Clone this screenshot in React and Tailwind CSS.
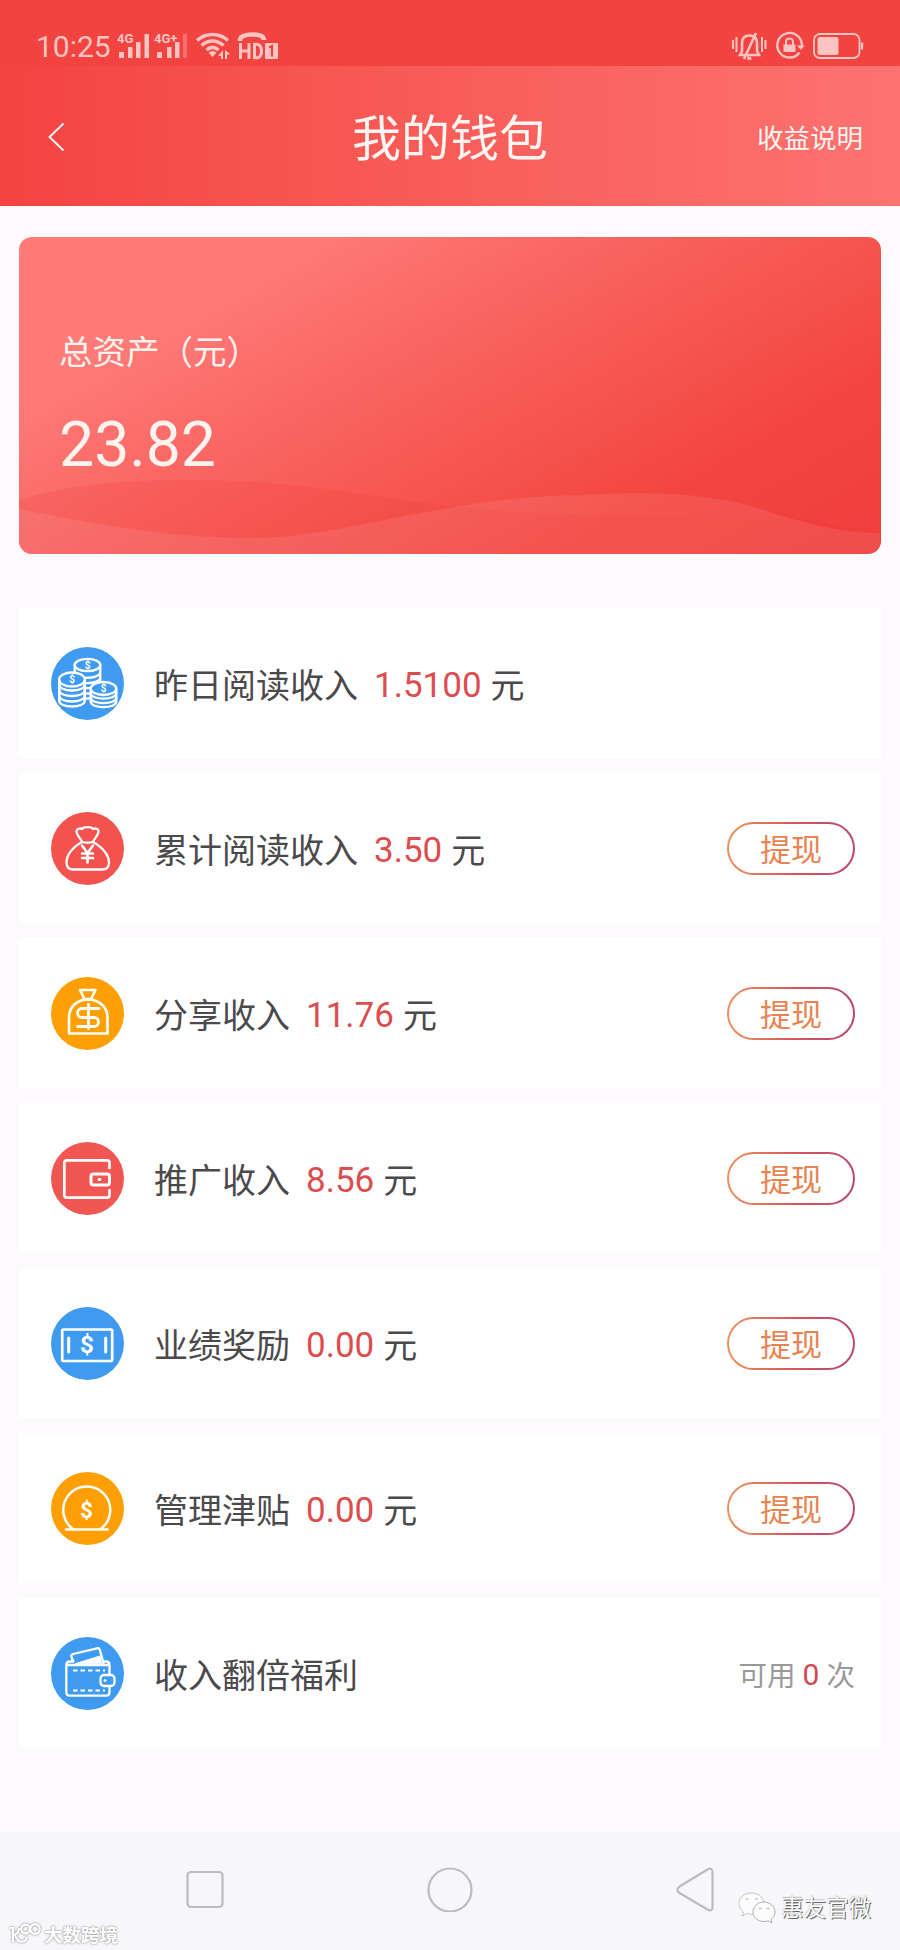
const ROWS = [
  { icon: CoinsIcon, label: '昨日阅读收入', amount: '1.5100' },
  { icon: PurseIcon, label: '累计阅读收入', amount: '3.50', withdraw: true },
  { icon: MoneyBagIcon, label: '分享收入', amount: '11.76', withdraw: true },
  { icon: WalletIcon, label: '推广收入', amount: '8.56', withdraw: true },
  { icon: BillIcon, label: '业绩奖励', amount: '0.00', withdraw: true },
  { icon: CoinIcon, label: '管理津贴', amount: '0.00', withdraw: true },
  { icon: CardWalletIcon, label: '收入翻倍福利', times: '0' },
]

function RoundIcon({ className, children }) {
  return (
    <svg
      className={`w-[73px] h-[73px] shrink-0 rounded-full ${className}`}
      viewBox="0 0 73 73"
      fill="none"
      stroke="#fff"
      strokeWidth="2.3"
      strokeLinecap="round"
      strokeLinejoin="round"
    >
      {children}
    </svg>
  )
}

function Sign({ x, y, size, children }) {
  return (
    <text
      x={x}
      y={y}
      fontSize={size}
      fontWeight="700"
      textAnchor="middle"
      fill="#fff"
      stroke="none"
      fontFamily="Roboto, sans-serif"
    >
      {children}
    </text>
  )
}

function CoinsIcon() {
  return (
    <RoundIcon className="bg-[#3f9bf0]">
      {/* back stack */}
      <ellipse cx="36.5" cy="18" rx="12.8" ry="6.2" />
      <path d="M23.7 18v8M49.3 18v17M32 30.5c10 1 17.3-1.500 17.300-6M34 36c8 .5 15.300-1.500 15.300-6M35 41c3 .3 5 0 7-.5M35 46.500h4M35 51.500h4" />
      {/* left stack */}
      <path d="M8.200 32.500v21c0 8 25.600 8 25.600 0v-21" fill="#3f9bf0" />
      <ellipse cx="21" cy="32.500" rx="12.800" ry="7" fill="#3f9bf0" />
      <path d="M8.200 37.500c0 8 25.600 8 25.600 0M8.200 43c0 8 25.600 8 25.600 0M8.200 48.500c0 8 25.600 8 25.600 0" />
      {/* right stack */}
      <path d="M39.700 41.500v13c0 7.500 25.600 7.500 25.600 0v-13" fill="#3f9bf0" />
      <ellipse cx="52.500" cy="41.500" rx="12.800" ry="6.500" fill="#3f9bf0" />
      <path d="M39.700 46c0 7.500 25.600 7.500 25.600 0M39.700 50.500c0 7.500 25.600 7.500 25.600 0" />
      <Sign x="36.500" y="21.500" size="10">$</Sign>
      <Sign x="21" y="35.500" size="10">$</Sign>
      <Sign x="52.500" y="44.500" size="10">$</Sign>
    </RoundIcon>
  )
}

function PurseIcon() {
  return (
    <RoundIcon className="bg-[#f3534f]">
      <path d="M31 30c-1.500-4-5.500-7-5.500-10.500 0-3 4-3.500 5.500-2.500 1.500-2.500 9.500-2.500 11 0 2-1 5.500-.5 5.500 2.500 0 3.500-4 6.500-5.500 10.500" />
      <path d="M31 30q5.500 1.500 11 0c10 5.500 16 13.500 16 20.500 0 4.500-2.500 7-7 7H22.500c-4.500 0-7-2.500-7-7 0-7 5.500-15 15.500-20.500z" />
      <path d="M31 33.500l5.500 7.500 5.500-7.500M36.500 41v9.500M31 41.500h11M31 46h11" strokeWidth="2.6" />
    </RoundIcon>
  )
}

function MoneyBagIcon() {
  return (
    <RoundIcon className="bg-[#fe9f05]">
      <path d="M29 13h15.500l-4.500 9h-6.500z" strokeWidth="2.600" />
      <path d="M18 56.500V40.500C18 30 26 22.500 37 22.500S56.500 30 56.500 40.500v16z" strokeWidth="2.600" />
      <path d="M48 31.500H31a4.500 4.500 0 0 0 0 9h12a4.500 4.500 0 0 1 0 9H26.500M37.500 27.500v24" strokeWidth="2.800" />
    </RoundIcon>
  )
}

function WalletIcon() {
  return (
    <RoundIcon className="bg-[#f15752]">
      <path d="M58.500 26v-5c0-1.600-1-2.600-2.600-2.600H16c-1.700 0-2.700 1-2.700 2.600v32c0 1.700 1 2.600 2.700 2.600h40c1.600 0 2.500-1 2.500-2.600v-5" strokeWidth="2.700" />
      <rect x="40" y="32" width="18.500" height="11" rx="2.500" strokeWidth="3" />
      <rect x="47" y="36.500" width="3" height="2" rx="1" fill="#fff" strokeWidth="1" />
    </RoundIcon>
  )
}

function BillIcon() {
  return (
    <RoundIcon className="bg-[#3f9bf0]">
      <rect x="11.200" y="22.500" width="50" height="31.500" rx="1" strokeWidth="2.700" />
      <path d="M17.700 31v14M54.700 31v14" strokeWidth="3" />
      <Sign x="36" y="46" size="24">$</Sign>
    </RoundIcon>
  )
}

function CoinIcon() {
  return (
    <RoundIcon className="bg-[#fe9f05]">
      <path d="M22 57a23.500 23.500 0 1 1 27.500 0M15 57.500h41.500" strokeWidth="2.500" />
      <Sign x="35.500" y="45.500" size="22">$</Sign>
    </RoundIcon>
  )
}

function CardWalletIcon() {
  return (
    <RoundIcon className="bg-[#3f9bf0]">
      <path d="M22 24l-1.500-4c-.5-1.500 0-2.500 1.500-3l24-5.700c1.500-.3 2.300 0 2.800 1.500L52.500 26" />
      <path d="M25 26.500l24-7.500 1.500 7.500z" fill="#fff" strokeWidth="1" />
      <path d="M58.500 37.500V28c0-2.500-1-3.500-3.500-3.500h-1.500M22.500 24.500H19c-2.500 0-3.700 1.200-3.700 3.500v27c0 2.500 1.200 3.700 3.700 3.700h36c2.500 0 3.500-1.200 3.500-3.700v-5M17 28h40" />
      <path d="M22 33.500h32M22 53.500h32" strokeWidth="2.200" strokeDasharray="4.500 3" strokeLinecap="butt" />
      <rect x="49.500" y="38" width="14" height="11" rx="3.500" />
      <circle cx="54" cy="43.500" r="1" fill="#fff" strokeWidth="1" />
    </RoundIcon>
  )
}

function StatusBar() {
  return (
    <div className="flex h-[66px] items-start justify-between bg-[#f1433f] pt-[30px] pl-[36px] pr-[36px] text-[#ffc4c1]">
      <div className="flex items-start">
        <span className="w-[74px] pt-[3px] font-[Roboto] text-[30px] leading-[28px] whitespace-nowrap">10:25</span>
        <svg className="ml-[6px]" width="162" height="32" viewBox="0 0 162 32" fill="currentColor">
          <g fontFamily="Roboto, sans-serif" fontWeight="700" fontSize="13">
            <text x="1" y="13">4G</text>
            <text x="38" y="13">4G+</text>
          </g>
          <path d="M3 22h5v6H3zM12 17h4.500v11H12zM20 12h4.500v16H20zM28.500 4H33v24h-4.500zM41 22h5v6h-5zM51 17h4.500v11H51zM59 12h4.500v16H59z" />
          <path d="M67 4h4v24h-4z" opacity=".35" />
          <g fill="none" stroke="currentColor" strokeWidth="3.600">
            <path d="M81 10.500c9-8 22-8 31 0" />
            <path d="M85.500 15.500c7-6 15-6 22 0" />
            <path d="M90.500 20c4-3.500 8-3.500 12 0" />
          </g>
          <path d="M92.500 22.500c2.500-2 5.500-2 8 0l-4 4.500zM107 20v9h-2v-3h-3zM109 20l5 4-3 1v4h-2z" />
          <path d="M124 11v-1c0-3 4-5.500 12.500-5.500s11.500 2.500 11.500 5.500" fill="none" stroke="currentColor" strokeWidth="4.600" />
          <path d="M124.500 13v16M133 13v16M124.500 21h9M138.500 14.300v13.400h2.500c6 0 6-13.400 0-13.400z" fill="none" stroke="currentColor" strokeWidth="3" />
          <rect x="149" y="13" width="13" height="16" rx="1" />
          <path d="M153 17.500l3-1.500v10.500" fill="none" stroke="#f1433f" strokeWidth="2.200" />
        </svg>
      </div>
      <svg width="133" height="31" viewBox="0 0 133 31" fill="none" stroke="currentColor">
        <path d="M2 10v9M5.500 7v15M31 7v15M34.500 10v9" strokeWidth="2" />
        <path d="M9 25l2-4v-8c0-5 3-7.500 7.500-7.500S26 8 26 13v8l2 4zM13 29L25 3M17.500 26.500v2h3" strokeWidth="2.600" />
        <path d="M68.500 22.500a12.300 12.300 0 1 1 2.300-6" strokeWidth="2.400" />
        <path d="M66 15.500h7.500L70 20z" fill="currentColor" stroke="none" />
        <rect x="52.500" y="14.500" width="12" height="7.500" fill="currentColor" stroke="none" />
        <path d="M55 15v-3.500c0-4 7-4 7 0V15" strokeWidth="2" />
        <rect x="83" y="4" width="45.500" height="24" rx="6" strokeWidth="1.800" />
        <rect x="86.500" y="7" width="21" height="18" rx="2.500" fill="currentColor" stroke="none" />
        <path d="M131 12.500v7" strokeWidth="2.400" />
      </svg>
    </div>
  )
}

function Header() {
  return (
    <header className="relative flex h-[140px] items-center justify-between bg-linear-to-r from-[#f34341] to-[#fd7370] pl-[48px] pr-[37px] pt-[2px] text-[#fff5f3]">
      <svg width="17" height="30" viewBox="0 0 17 30" fill="none" stroke="currentColor" strokeWidth="2">
        <path d="M15.500 1.500L1.500 15l14 13.500" />
      </svg>
      <h1 className="absolute inset-x-0 top-[34px] text-center text-[49px] leading-[70px]">我的钱包</h1>
      <span className="text-[26.500px] leading-[40px]">收益说明</span>
    </header>
  )
}

function AssetCard() {
  return (
    <section className="relative mx-[19px] mt-[31px] h-[317px] overflow-hidden rounded-[13px] bg-[linear-gradient(150deg,#ff7b78_20%,#f96460_43%,#f3453f_78%,#f03e3e_100%)] pl-[40px] text-[#fff3f0]">
      <svg className="absolute inset-0" width="861" height="317" viewBox="0 0 861 317">
        <path d="M0 263C70 240 180 240 260 247S420 272 520 276 680 282 756 277L861 296V317H0z" fill="#ee3a3a" opacity=".18" />
        <path d="M0 272C90 290 160 302 245 301 340 296 430 260 560 258 640 254 700 256 756 277 800 290 830 296 861 296V317H0z" fill="#fff" opacity=".09" />
      </svg>
      <div className="relative pt-[89px] text-[33.500px] leading-[48px]">总资产（元）</div>
      <div className="relative mt-[36px] font-[Roboto] text-[62.500px] leading-[70px]">23.82</div>
    </section>
  )
}

function WithdrawButton() {
  return (
    <button className="h-[53px] w-[128px] rounded-full bg-linear-to-r from-[#e8935f] via-[#d9575a] to-[#b94672] p-[2px]">
      <span className="flex h-full w-full items-center justify-center rounded-full bg-white pb-px text-[31px] leading-none text-[#e88352]">
        提现
      </span>
    </button>
  )
}

function IncomeRow({ row }) {
  const Icon = row.icon
  return (
    <li className="flex h-[150px] items-center bg-white pl-[32px] pr-[26px]">
      <Icon />
      <span className="ml-[30px] pt-[2px] text-[34px] leading-[50px] text-[#4b494c]">{row.label}</span>
      {row.amount && (
        <>
          <span className="ml-[16px] pt-[6px] font-[Roboto] text-[35px] leading-[50px] text-[#dc4d50]">{row.amount}</span>
          <span className="ml-[9px] pt-[2px] text-[34px] leading-[50px] text-[#4b494c]">元</span>
        </>
      )}
      <div className="ml-auto">
        {row.withdraw && <WithdrawButton />}
        {row.times && (
          <div className="flex pt-[3px] text-[28.500px] leading-[44px] text-[#999]">
            <span>可用</span>
            <span className="mx-[7px] pt-px font-[Roboto] text-[30px] text-[#cf4a52]">{row.times}</span>
            <span>次</span>
          </div>
        )}
      </div>
    </li>
  )
}

function NavBar() {
  return (
    <nav className="mt-auto flex h-[118px] items-start justify-between bg-[#f7f6fa] px-[186px] pt-[34px]">
      <svg width="38" height="46" viewBox="0 0 38 46" fill="none" stroke="#bdbbc0" strokeWidth="2.200">
        <rect x="1.500" y="6" width="35" height="35" rx="3.500" />
      </svg>
      <svg width="46" height="46" viewBox="0 0 46 46" fill="none" stroke="#bdbbc0" strokeWidth="2.200">
        <circle cx="23" cy="24" r="21.500" />
      </svg>
      <svg width="38" height="46" viewBox="0 0 38 46" fill="none" stroke="#bdbbc0" strokeWidth="2.200" strokeLinejoin="round">
        <path d="M31.500 3.500Q36.500 1 36.500 6V41q0 5-5 2.500L3.500 27Q-.5 24 3.500 20.500z" />
      </svg>
    </nav>
  )
}

function Watermarks() {
  return (
    <>
      <div className="absolute bottom-[4px] left-[8px] flex items-center gap-[3px] text-white">
        <svg className="drop-shadow-[0_0_1px_#777]" width="33" height="24" viewBox="0 0 33 24" fill="none" stroke="#fff" strokeWidth="2.200">
          <path d="M1.500 6H5v14M6 13c3-1 5-3 5-7M7 13c2 8 10 9 12 2" />
          <circle cx="17.500" cy="7" r="4.300" />
          <circle cx="27" cy="7" r="4.800" />
        </svg>
        <span className="text-[18.500px] leading-[24px] font-bold [text-shadow:0_0_2px_#999,0_0_2px_#aaa]">大数跨境</span>
      </div>
      <div className="absolute right-[29px] bottom-[26px] flex items-center gap-[5px]">
        <svg width="38" height="32" viewBox="0 0 38 32" fill="#fcfcfd" stroke="#9b9b9e" strokeWidth=".8">
          <path d="M13 1C6 1 1 5.500 1 11.500c0 3.500 2 6.500 4.500 8.500L4 24l5-2.500c2 .6 4 .8 6 .6 9 0 12-5 11-12C25 4.500 19.500 1 13 1z" stroke="#b5b5b8" />
          <path d="M26 10c-6.500 0-11 4.500-11 10s5 9.500 11 9.500c1.500 0 3-.2 4.500-.7L34 31l-1-3.500c2.500-2 4-4.500 4-7.500 0-5.500-5-10-11-10z" />
          <path d="M7.500 7.500q1.500-2 3 0M17 7.500q1.500-2 3 0M21 17q1.500-2 3 0M28.500 17q1.500-2 3 0" fill="none" />
        </svg>
        <span className="-mt-[4px] text-[22.500px] leading-[32px] text-[#fdfdfd] [text-shadow:1px_1px_0_#666,0_-1px_1px_#bbb]">惠友官微</span>
      </div>
    </>
  )
}

export default function App() {
  return (
    <div className="relative flex h-[1950px] w-[900px] flex-col overflow-hidden bg-[#fcfafc] font-['Noto_Sans_CJK_SC',sans-serif]">
      <StatusBar />
      <Header />
      <AssetCard />
      <ul className="mx-[19px] mt-[54px] flex flex-col gap-[15px]">
        {ROWS.map(row => (
          <IncomeRow key={row.label} row={row} />
        ))}
      </ul>
      <NavBar />
      <Watermarks />
    </div>
  )
}
